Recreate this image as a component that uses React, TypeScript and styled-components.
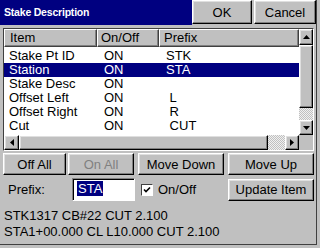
import React from "react";
import styled, { createGlobalStyle, css } from "styled-components";

const Global = createGlobalStyle`
  html, body { margin: 0; padding: 0; background: #c0c0c0; }
  #root { width: 320px; height: 248px; }
`;

const raised = css`
  background: #c0c0c0;
  border: 1px solid;
  border-color: #ffffff #000000 #000000 #ffffff;
  box-shadow: inset -1px -1px #808080, inset 1px 1px #dfdfdf;
  box-sizing: border-box;
`;

const Window = styled.div`
  width: 317px;
  height: 245px;
  box-sizing: border-box;
  border-right: 1px solid #404040;
  border-bottom: 1px solid #404040;
  background: #c0c0c0;
  display: flex;
  flex-direction: column;
  font-family: "Liberation Sans", Arial, sans-serif;
  font-size: 13px;
  color: #000;
`;

const TitleBar = styled.div`
  display: flex;
  height: 25px;
  flex-shrink: 0;
`;

const Title = styled.div`
  flex: 1;
  background: #000080;
  color: #fff;
  font-weight: bold;
  font-size: 10.5px;
  letter-spacing: -0.2px;
  display: flex;
  align-items: center;
  padding-left: 4px;
  padding-bottom: 1px;
`;

const Btn = styled.button<{ $w: number; $h?: number; $ml?: number; $mr?: number; $push?: boolean; $disabled?: boolean }>`
  ${raised};
  width: ${(p) => p.$w}px;
  height: ${(p) => p.$h ?? 22}px;
  margin: 0 ${(p) => p.$mr ?? 0}px 0 ${(p) => (p.$push ? "auto" : `${p.$ml ?? 0}px`)};
  padding: 0;
  font-family: "Liberation Sans", Arial, sans-serif;
  font-size: 13px;
  color: ${(p) => (p.$disabled ? "#808080" : "#000")};
  flex-shrink: 0;
`;

const ListBox = styled.div`
  margin: 3px 0 0 3px;
  width: 311px;
  height: 123px;
  box-sizing: border-box;
  border: 1px solid;
  border-color: #404040 #ffffff #ffffff #404040;
  display: grid;
  grid-template-columns: 295px 14px;
  grid-template-rows: 106px 15px;
  background: #fff;
`;

const Content = styled.div`
  overflow: hidden;
  background: #fff;
`;

const cols = css`
  display: grid;
  grid-template-columns: 93px 62px 140px;
`;

const Header = styled.div`
  ${cols};
  height: 18px;
`;

const HeadCell = styled.div<{ $pl: number }>`
  ${raised};
  box-shadow: inset -1px -1px #808080;
  border-color: #ffffff #404040 #404040 #ffffff;
  padding-left: ${(p) => p.$pl}px;
  line-height: 16px;
  height: 18px;
`;

const Rows = styled.div`
  padding-top: 2px;
`;

const Row = styled.div<{ $sel?: boolean }>`
  ${cols};
  height: 14px;
  line-height: 14px;
  background: ${(p) => (p.$sel ? "#000080" : "transparent")};
  color: ${(p) => (p.$sel ? "#fff" : "#000")};
`;

const Cell = styled.div<{ $pl: number }>`
  padding-left: ${(p) => p.$pl}px;
  white-space: pre;
`;

const VScroll = styled.div`
  display: flex;
  flex-direction: column;
  background: #e4e4e4;
`;

const HScroll = styled.div`
  display: flex;
  background: #e4e4e4;
`;

const ArrowBtn = styled.div<{ $w: number; $h: number }>`
  ${raised};
  width: ${(p) => p.$w}px;
  height: ${(p) => p.$h}px;
  display: flex;
  align-items: center;
  justify-content: center;
  flex-shrink: 0;
`;

const Thumb = styled.div<{ $w?: number; $h?: number }>`
  ${raised};
  width: ${(p) => (p.$w ? `${p.$w}px` : "100%")};
  height: ${(p) => (p.$h ? `${p.$h}px` : "100%")};
  flex-shrink: 0;
`;

const Track = styled.div`
  flex: 1;
  background-color: #e0e0e0;
  background-image: repeating-conic-gradient(#c0c0c0 0% 25%, #f0f0f0 0% 50%);
  background-size: 2px 2px;
`;

const Corner = styled.div`
  background: #c0c0c0;
`;

const ButtonRow = styled.div`
  display: flex;
  margin: 2px 0 0 3px;
  height: 22px;
`;

const EditRow = styled.div`
  display: flex;
  align-items: center;
  margin-top: 3px;
  height: 23px;
`;

const Label = styled.div`
  width: 64px;
  padding-left: 8px;
  flex-shrink: 0;
`;

const Input = styled.div`
  width: 63px;
  height: 23px;
  box-sizing: border-box;
  background: #fff;
  border: 1px solid;
  border-color: #808080 #ffffff #ffffff #808080;
  box-shadow: inset 1px 1px #000000;
  padding: 3px 0 0 4px;
  line-height: 14px;
`;

const Selected = styled.span`
  background: #000080;
  color: #fff;
  padding: 0 1px;
`;

const Check = styled.div`
  width: 12px;
  height: 12px;
  box-sizing: border-box;
  margin-left: 6px;
  background: #fff;
  border: 1px solid;
  border-color: #404040 #ffffff #ffffff #404040;
  display: flex;
  align-items: center;
  justify-content: center;
  flex-shrink: 0;
`;

const CheckLabel = styled.div`
  margin-left: 5px;
`;

const Status = styled.div`
  margin-top: 7px;
  padding-left: 4px;
  line-height: 16px;
`;

const Tri = ({ dir }: { dir: "up" | "down" | "left" | "right" }) => {
  const pts = {
    up: "0,4 7,4 3.5,0",
    down: "0,0 7,0 3.5,4",
    left: "4,0 4,7 0,3.5",
    right: "0,0 0,7 4,3.5",
  }[dir];
  const vert = dir === "up" || dir === "down";
  return (
    <svg width={vert ? 7 : 4} height={vert ? 4 : 7} viewBox={vert ? "0 0 7 4" : "0 0 4 7"}>
      <polygon points={pts} fill="#000" />
    </svg>
  );
};

const rows = [
  ["Stake Pt ID", "ON", "STK"],
  ["Station", "ON", "STA"],
  ["Stake Desc", "ON", ""],
  ["Offset Left", "ON", " L"],
  ["Offset Right", "ON", " R"],
  ["Cut", "ON", " CUT"],
];

export default function App() {
  return (
    <>
      <Global />
      <Window>
        <TitleBar>
          <Title>Stake Description</Title>
          <Btn $w={60} $h={24}>OK</Btn>
          <Btn $w={62} $h={24} $ml={2}>Cancel</Btn>
        </TitleBar>
        <ListBox>
          <Content>
            <Header>
              <HeadCell $pl={5}>Item</HeadCell>
              <HeadCell $pl={3}>On/Off</HeadCell>
              <HeadCell $pl={4}>Prefix</HeadCell>
            </Header>
            <Rows>
              {rows.map((r, i) => (
                <Row key={r[0]} $sel={i === 1}>
                  <Cell $pl={5}>{r[0]}</Cell>
                  <Cell $pl={7}>{r[1]}</Cell>
                  <Cell $pl={7}>{r[2]}</Cell>
                </Row>
              ))}
            </Rows>
          </Content>
          <VScroll>
            <ArrowBtn $w={14} $h={16}>
              <Tri dir="up" />
            </ArrowBtn>
            <Thumb $h={63} />
            <Track />
            <ArrowBtn $w={14} $h={15}>
              <Tri dir="down" />
            </ArrowBtn>
          </VScroll>
          <HScroll>
            <ArrowBtn $w={15} $h={15}>
              <Tri dir="left" />
            </ArrowBtn>
            <Thumb $w={249} />
            <Track />
            <ArrowBtn $w={14} $h={15}>
              <Tri dir="right" />
            </ArrowBtn>
          </HScroll>
          <Corner />
        </ListBox>
        <ButtonRow>
          <Btn $w={63}>Off All</Btn>
          <Btn $w={66} $ml={2} $disabled>
            On All
          </Btn>
          <Btn $w={86} $ml={4}>Move Down</Btn>
          <Btn $w={86} $ml={4}>Move Up</Btn>
        </ButtonRow>
        <EditRow>
          <Label>Prefix:</Label>
          <Input>
            <Selected>STA</Selected>
          </Input>
          <Check>
            <svg width="8" height="8" viewBox="0 0 8 8">
              <polyline points="1,3.5 3,5.5 7,1.5" fill="none" stroke="#000" strokeWidth="1.6" />
            </svg>
          </Check>
          <CheckLabel>On/Off</CheckLabel>
          <Btn $w={86} $push $mr={2}>
            Update Item
          </Btn>
        </EditRow>
        <Status>
          <div>STK1317 CB#22 CUT 2.100</div>
          <div>STA1+00.000 CL L10.000 CUT 2.100</div>
        </Status>
      </Window>
    </>
  );
}
